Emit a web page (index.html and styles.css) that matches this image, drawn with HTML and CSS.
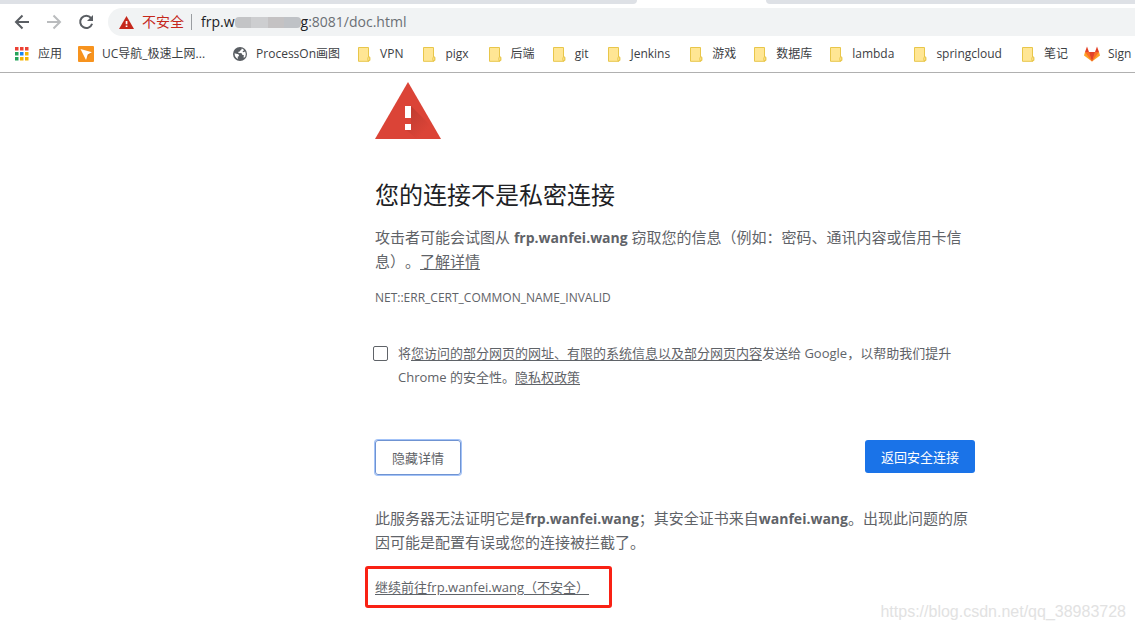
FILE: index.html
```html
<!DOCTYPE html>
<html lang="zh-CN">
<head>
<meta charset="utf-8">
<title>隐私设置错误</title>
<link rel="stylesheet" href="styles.css">
</head>
<body>
<svg class="sprite" aria-hidden="true">
  <symbol id="folder" viewBox="0 0 13 15">
    <path d="M.5.5h10v9.500h1.300v3.200l-.8 1.100H.5z" fill="#ffe694" stroke="#e8c64a"/>
    <path d="M9.800 13.500v-2.500q0-1 1-1 .9 0 .9 1v2.500z" fill="#ffe694" stroke="#e8c64a" stroke-width=".9"/>
  </symbol>
</svg>
<header class="browser">
  <div class="tabstrip"><div class="tab-left"></div><div class="tab-right"></div></div>
  <div class="toolbar">
    <button class="nav" aria-label="后退"><svg width="16" height="16" viewBox="0 0 16 16"><path d="M15 8H2.500M8.500 1.500L2 8l6.500 6.500" fill="none" stroke="#5a5e63" stroke-width="2"/></svg></button>
    <button class="nav" aria-label="前进"><svg width="16" height="16" viewBox="0 0 16 16"><path d="M1 8h12.500M7.500 1.500L14 8l-6.500 6.500" fill="none" stroke="#babcbe" stroke-width="2"/></svg></button>
    <button class="nav" aria-label="重新加载"><svg width="16" height="16" viewBox="0 0 16 16"><path d="M13 4A6.100 6.100 0 1 0 14.100 9.800" fill="none" stroke="#5a5e63" stroke-width="2"/><path d="M15 1v6H9z" fill="#5a5e63"/></svg></button>
    <div class="omnibox">
      <button class="insecure"><svg width="15" height="13" viewBox="0 0 15 13"><path d="M7.500 0L15 13H0z" fill="#c5281c"/><path d="M6.700 5h1.700v3.200H6.700zM6.700 9.500h1.700v1.600H6.700z" fill="#fff"/></svg>不安全</button>
      <div class="url"><span class="host">frp.w</span><span class="mosaic"><i></i><i></i><i></i><i></i></span><span class="host">g</span>:8081/doc.html</div>
    </div>
  </div>
  <nav class="bookmarks">
    <button class="mark"><svg class="icon" viewBox="0 0 14 14"><path d="M0 0h3.500v3.500H0zM5 0h3.500v3.500H5zM10 0h3.500v3.500H10z" fill="#ec4134"/><path d="M0 5h3.500v3.500H0zM0 10h3.500v3.500H0z" fill="#25a35a"/><path d="M5 5h3.500v3.500H5z" fill="#1a86f0"/><path d="M10 5h3.500v3.500H10zM5 10h3.500v3.500H5zM10 10h3.500v3.500H10z" fill="#f5b400"/></svg>应用</button>
    <a class="mark site" href="#"><svg class="favicon" viewBox="0 0 16 16"><rect width="16" height="16" rx="1" fill="#f7931e"/><path d="M2.500 3L14 6.200 9.800 8.400 8 14z" fill="#fff"/><path d="M9.800 8.400L14 6.200l-5 6z" fill="#c5762b" opacity=".5"/></svg>UC导航_极速上网...</a>
    <a class="mark process" href="#"><svg class="icon" viewBox="0 0 14 14"><circle cx="7" cy="7" r="7" fill="#5a5e63"/><path d="M8.700 1.600Q9 3 7.500 3.200L6.800 4.500Q5.600 4.200 5 5.400L7 6.200Q9.200 5.700 9.200 7.700L11 8.200Q10.300 9 10.800 10.900L12.300 9.700Q13.300 7 12.200 4.600L10.800 5.100Q9.600 5.300 9.700 4.200L11.100 3.200Q10 2 8.700 1.600zM1.600 6.200Q3.700 7.100 4.900 6.900 6.200 7.500 6 8.900L4.700 9.700 4.900 11.900Q1.500 10.400 1.600 6.200z" fill="#fff"/></svg>ProcessOn画图</a>
    <button class="mark folder latin"><svg><use href="#folder"/></svg>VPN</button>
    <button class="mark folder latin"><svg><use href="#folder"/></svg>pigx</button>
    <button class="mark folder"><svg><use href="#folder"/></svg>后端</button>
    <button class="mark folder latin"><svg><use href="#folder"/></svg>git</button>
    <button class="mark folder latin"><svg><use href="#folder"/></svg>Jenkins</button>
    <button class="mark folder"><svg><use href="#folder"/></svg>游戏</button>
    <button class="mark folder"><svg><use href="#folder"/></svg>数据库</button>
    <button class="mark folder latin"><svg><use href="#folder"/></svg>lambda</button>
    <button class="mark folder latin"><svg><use href="#folder"/></svg>springcloud</button>
    <button class="mark folder"><svg><use href="#folder"/></svg>笔记</button>
    <a class="mark site" href="#"><svg class="favicon" viewBox="0 0 16 16"><path d="M8 15.500L0 9.500 1 6h14l1 3.500z" fill="#fca326"/><path d="M8 15.500L1 6h4zM8 15.500L15 6h-4z" fill="#fc6d26"/><path d="M8 15.500L5 6h6zM1 6L3 .5 5 6zM15 6L13 .5 11 6z" fill="#e24329"/></svg>Sign</a>
  </nav>
</header>
<main class="interstitial">
  <svg class="warning" viewBox="0 0 66 57" role="img" aria-label="警告">
    <defs><linearGradient id="shade" x1="0" y1="0" x2="1" y2="1"><stop offset="0" stop-color="#b93a2f"/><stop offset=".7" stop-color="#db4437"/></linearGradient></defs>
    <path d="M33 0l33 57H0z" fill="#db4437"/>
    <path d="M36 24l17 17 9 16H42l-12-10v-5h6v-6h-6z" fill="url(#shade)"/>
    <path d="M30 24h6v12h-6zM30 42h6v6h-6z" fill="#fff"/>
  </svg>
  <h1>您的连接不是私密连接</h1>
  <p class="lead">攻击者可能会试图从 <strong>frp.wanfei.wang</strong> 窃取您的信息（例如：密码、通讯内容或信用卡信息）。<a href="#">了解详情</a></p>
  <p class="code">NET::ERR_CERT_COMMON_NAME_INVALID</p>
  <div class="report">
    <input type="checkbox" id="opt-in">
    <label for="opt-in">将<a href="#">您访问的部分网页的网址、有限的系统信息以及部分网页内容</a>发送给 Google，以帮助我们提升 Chrome 的安全性。<a href="#">隐私权政策</a></label>
  </div>
  <div class="actions">
    <button class="details">隐藏详情</button>
    <button class="primary">返回安全连接</button>
  </div>
  <p class="explain">此服务器无法证明它是<strong>frp.wanfei.wang</strong>；其安全证书来自<strong>wanfei.wang</strong>。出现此问题的原因可能是配置有误或您的连接被拦截了。</p>
  <div class="proceed"><a href="#">继续前往frp.wanfei.wang（不安全）</a></div>
</main>
<div class="watermark">https://blog.csdn.net/qq_38983728</div>
</body>
</html>
```
FILE: styles.css
```css
* { box-sizing: border-box; }
body {
  margin: 0;
  background: #fff;
  color: #5f6368;
  font-family: "Open Sans", "Noto Sans CJK SC", sans-serif;
  font-size: 15px;
  line-height: 24px;
  text-spacing-trim: space-all;
  overflow-x: hidden;
}
button {
  margin: 0;
  padding: 0;
  border: 0;
  background: none;
  color: inherit;
  font: inherit;
}
a { color: inherit; text-underline-offset: 2px; }
strong { font-size: 14px; line-height: 20px; }
svg { display: block; flex: none; }
.sprite { position: absolute; width: 0; height: 0; }

.browser { border-bottom: 1px solid #b0b0b0; overflow: hidden; }
.tabstrip { display: flex; gap: 129px; height: 4px; }
.tab-left { flex: 0 0 637px; background: #dee1e6; border-bottom-right-radius: 4px; }
.tab-right { flex: 1; background: #dee1e6; border-bottom-left-radius: 4px; }
.toolbar { display: flex; align-items: center; gap: 16px; padding: 4px 0 0 14px; }
.nav { display: flex; }
.omnibox {
  flex: 1;
  display: flex;
  align-items: center;
  height: 28px;
  margin-left: -2px;
  padding-left: 11px;
  border-radius: 14px 0 0 14px;
  background: #f1f3f4;
}
.insecure {
  display: flex;
  align-items: center;
  gap: 8px;
  height: 16px;
  padding-right: 7px;
  border-right: 1px solid #9a9da1;
  color: #c5281c;
  font-size: 14px;
  line-height: 16px;
}
.url { display: flex; align-items: center; padding-left: 9px; font-size: 14px; color: #6b6f74; }
.host { color: #202124; }
.mosaic { display: flex; width: 66px; height: 11px; border-radius: 4px; overflow: hidden; }
.mosaic i { flex: 1; background: #c3c4c6; }
.mosaic i:nth-child(2) { background: #cdced0; }
.mosaic i:nth-child(3) { background: #c4c2c3; }
.mosaic i:nth-child(4) { background: #bfc2c6; }

.bookmarks {
  display: flex;
  align-items: center;
  gap: 18px;
  height: 36px;
  padding-left: 15px;
  color: #3c4043;
  font-size: 12px;
  line-height: 20px;
  white-space: nowrap;
}
.mark { display: flex; flex: none; align-items: center; gap: 9px; text-decoration: none; }
.icon { width: 14px; height: 14px; }
.favicon { width: 16px; height: 16px; }
.site { gap: 8px; margin-left: -2px; }
.process { margin-left: 10px; }
.folder svg { width: 13px; height: 15px; }
.latin { padding-right: 2px; }

.interstitial { max-width: 975px; padding: 9px 0 21px 375px; }
.warning { width: 66px; height: 57px; }
h1 {
  margin: 41px 0 15px;
  color: #202124;
  font-size: 24px;
  font-weight: 400;
  line-height: 30px;
}
p { margin: 0; }
.code { margin-top: 13px; font-size: 12px; }
.report { display: flex; gap: 10px; margin: 31px 0 51px -2px; font-size: 13px; }
.report input {
  appearance: none;
  flex: none;
  width: 15px;
  height: 15px;
  margin: 5px 0 0;
  border: 1px solid #5f6368;
  border-radius: 2px;
  background: #fff;
}
.actions { display: flex; justify-content: space-between; align-items: flex-start; margin-bottom: 31px; font-size: 13px; }
.details, .primary { height: 33px; padding: 0 16px; border-radius: 3px; }
.details { height: 35px; border: 1px solid #6f93d2; box-shadow: 0 0 0 1px #a3c3f8; }
.primary { background: #1a73e8; color: #fff; }
.proceed {
  width: 247px;
  margin: 12px 0 0 -10px;
  padding: 6px 7px;
  border: 3px solid #f92114;
  border-radius: 3px;
  font-size: 13px;
  white-space: nowrap;
}
.watermark {
  position: absolute;
  right: 9px;
  bottom: 6px;
  color: #e2e2e2;
  font: 16px/24px "Liberation Sans", sans-serif;
}
```
